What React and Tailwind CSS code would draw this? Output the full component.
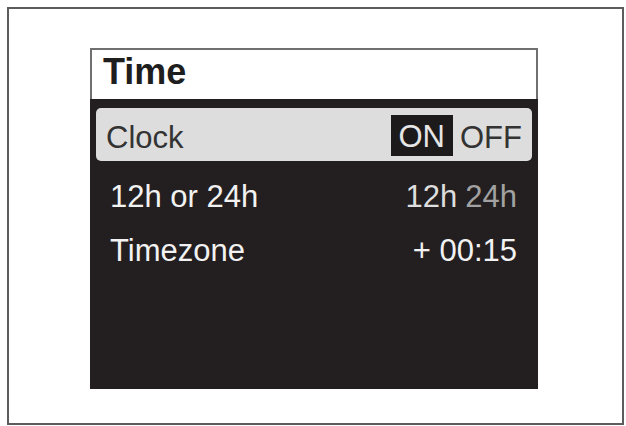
import React from 'react';

const font = { fontFamily: '"Liberation Sans", Arial, Helvetica, sans-serif' };

const SettingRow = ({ label, children }) => (
  <div className="h-[54px] flex items-center justify-between pl-[20px] pr-[21px]">
    <span className="text-[31px] text-[#f2f2f2]">{label}</span>
    <div className="flex items-center text-[31px]">{children}</div>
  </div>
);

const App = () => {
  return (
    <div className="w-[626px] h-[426px] bg-white pl-[7px] pt-[7px]" style={font}>
      <div className="w-[617px] h-[418px] border-2 border-[#5c5c5c] pl-[81px] pt-[39px]">
        <div className="w-[448px] h-[341px] flex flex-col">
          {/* title bar */}
          <div className="h-[51px] bg-white border-2 border-b-0 border-[#707070] flex items-center pl-[11px]">
            <span className="mb-[5px] text-[36px] font-bold text-[#1e1e1e] leading-none">Time</span>
          </div>

          <div className="flex-1 bg-[#231f20] flex flex-col pt-[9px]">
            {/* selected row */}
            <div className="h-[53px] mx-[6px] rounded-[5px] bg-[#dedddd] flex items-center justify-between pl-[10px] pr-[10px]">
              <span className="mt-[8px] text-[31px] text-[#333]">Clock</span>
              <div className="flex items-center">
                <div className="mt-[2px] h-[41px] px-[8px] bg-[#1d1a1b] flex items-center">
                  <span className="mt-[4px] text-[31px] text-[#e6e6e6]">ON</span>
                </div>
                <span className="mt-[7px] ml-[7px] text-[31px] text-[#333]">OFF</span>
              </div>
            </div>

            <div className="mt-[9px]">
              <SettingRow label="12h or 24h">
                <span className="text-[#dedede]">12h</span>
                <span className="ml-[8px] text-[#a2a2a2]">24h</span>
              </SettingRow>
              <SettingRow label="Timezone">
                <span className="text-[#f2f2f2]">+ 00:15</span>
              </SettingRow>
            </div>
          </div>
        </div>
      </div>
    </div>
  );
};

export default App;
